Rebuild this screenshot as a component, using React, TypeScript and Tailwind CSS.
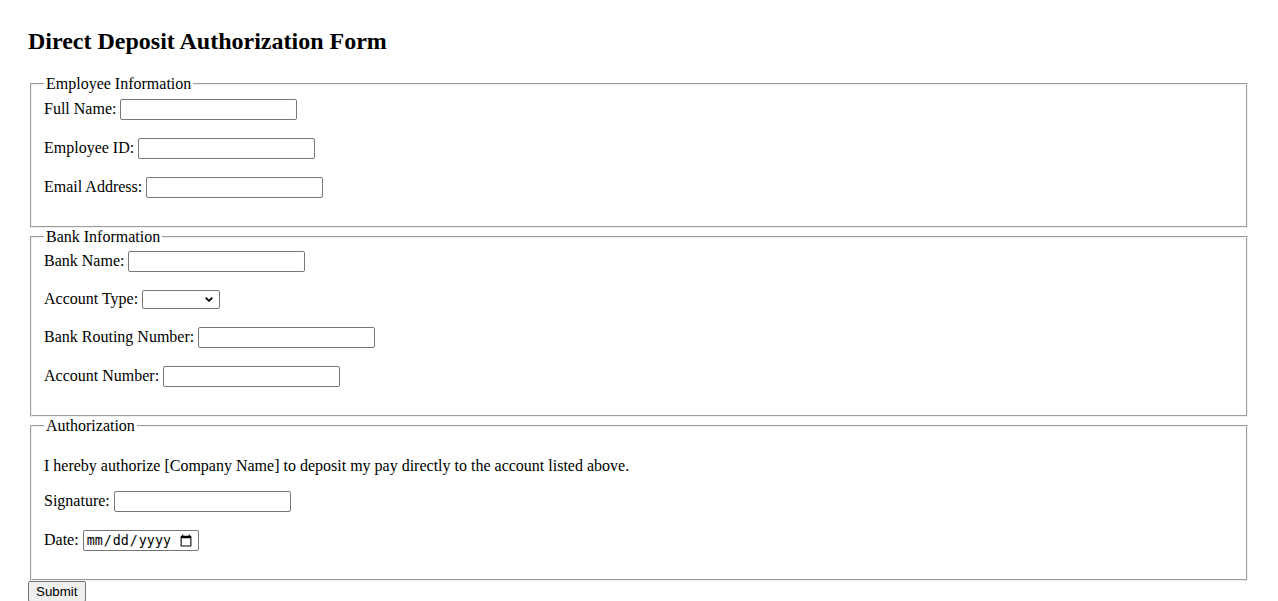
import { useState } from "react";

const inputClass =
  "inline-block w-[177px] h-[21px] align-baseline rounded-[2px] border border-[#767676] bg-white px-[2px] py-[1px] font-['Liberation_Sans',Arial,sans-serif] text-[13.33px] leading-[normal] text-black outline-none";

const fieldsetClass =
  "mx-[2px] min-w-0 border-2 border-[#f0f0f0] [border-style:groove] px-[12px] pt-[5.6px] pb-[10px]";

function TextRow({ id, label, type = "text" }: { id: string; label: string; type?: string }) {
  return (
    <>
      <label htmlFor={id}>{label}</label> <input id={id} name={id} type={type} className={inputClass} />
      <br />
      <br />
    </>
  );
}

export default function App() {
  const [accountType, setAccountType] = useState("");

  return (
    <div className="min-h-screen bg-white font-['Liberation_Serif','Times_New_Roman',serif] text-[16px] leading-[normal] text-black">
      <form className="px-[28px] pt-[28px]" onSubmit={(event) => event.preventDefault()}>
        <h2 className="mb-[19.92px] text-[24px] font-bold leading-[normal]">Direct Deposit Authorization Form</h2>

        <fieldset className={fieldsetClass}>
          <legend className="px-[2px]">Employee Information</legend>
          <TextRow id="fullName" label="Full Name:" />
          <TextRow id="employeeId" label="Employee ID:" />
          <TextRow id="email" label="Email Address:" type="email" />
        </fieldset>

        <fieldset className={fieldsetClass}>
          <legend className="px-[2px]">Bank Information</legend>
          <TextRow id="bankName" label="Bank Name:" />
          <label htmlFor="accountType">Account Type:</label>{" "}
          <span className="relative inline-block align-baseline">
            <select
              id="accountType"
              value={accountType}
              onChange={(event) => setAccountType(event.target.value)}
              className="block h-[19px] w-[78px] appearance-none rounded-[2px] border border-[#767676] bg-white px-[3px] font-['Liberation_Sans',Arial,sans-serif] text-[13.33px] leading-[normal] outline-none"
            >
              <option value=""></option>
              <option value="checking">Checking</option>
              <option value="savings">Savings</option>
            </select>
            <svg
              viewBox="0 0 8 5"
              className="pointer-events-none absolute right-[7px] top-[7px] h-[5px] w-[8px]"
              fill="none"
              stroke="#000"
              strokeWidth="1.8"
            >
              <path d="M0.7 0.7 L4 3.9 L7.3 0.7" />
            </svg>
          </span>
          <br />
          <br />
          <TextRow id="routing" label="Bank Routing Number:" />
          <TextRow id="accountNumber" label="Account Number:" />
        </fieldset>

        <fieldset className={fieldsetClass}>
          <legend className="px-[2px]">Authorization</legend>
          <p className="my-[16px]">
            I hereby authorize [Company Name] to deposit my pay directly to the account listed above.
          </p>
          <TextRow id="signature" label="Signature:" />
          <label htmlFor="date">Date:</label>{" "}
          <input
            id="date"
            name="date"
            type="date"
            className="inline-block h-[21px] w-[116px] align-baseline rounded-[2px] border border-[#767676] bg-white pl-[2px] pr-[3px] font-['DejaVu_Sans_Mono','Liberation_Mono',monospace] text-[13.33px] leading-[normal] text-black outline-none"
          />
          <br />
          <br />
        </fieldset>

        <button
          type="submit"
          className="rounded-[2px] border border-[#767676] bg-[#efefef] pl-[7px] pr-[8px] py-[2px] font-['Liberation_Sans',Arial,sans-serif] text-[13.33px] leading-[normal] text-black"
        >
          Submit
        </button>
      </form>
    </div>
  );
}
